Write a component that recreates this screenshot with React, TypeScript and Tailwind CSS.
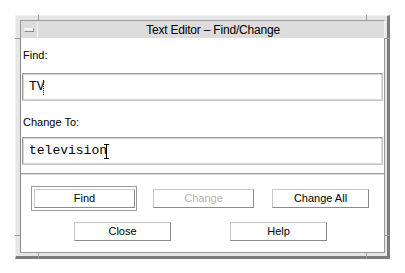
import React from 'react'

const sans = { fontFamily: '"Liberation Sans", Arial, sans-serif' }
const mono = { fontFamily: '"Liberation Mono", "Courier New", monospace' }

function Button({ label, w, disabled }: { label: string; w: string; disabled?: boolean }) {
  return (
    <div
      className={`${w} h-[19px] bg-white border border-t-[#c8c8c8] border-l-[#c8c8c8] border-r-[#8a8a8a] border-b-[#8a8a8a] flex items-center justify-center text-[11px] ${disabled ? 'text-[#b4b4b4]' : 'text-black'}`}
      style={sans}
    >
      {label}
    </div>
  )
}

function Field({ children }: { children: React.ReactNode }) {
  return (
    <div className="mx-[1px] h-[28px] border border-t-[#9a9a9a] border-l-[#9a9a9a] border-r-[#c8c8c8] border-b-[#c8c8c8]">
      <div className="h-full border border-[#d6d6d6] flex items-center pl-[5px] text-[13px] text-black" style={mono}>
        {children}
      </div>
    </div>
  )
}

export default function App() {
  return (
    <div className="w-[405px] h-[273px] bg-white pt-[15px] pl-[15px]">
      <div className="relative w-[375px] h-[244px] bg-[#e6e6e6] border-t border-l border-[#f2f2f2] border-r-[3px] border-b-[3px] border-r-[#7c7c7c] border-b-[#7c7c7c] pt-[4px] pl-[4px] pr-[2px] pb-[3px] flex flex-col">
        {/* resize corner notches */}
        <div className="absolute left-[22px] top-[-1px] w-[1px] h-[5px] bg-[#9a9a9a]" />
        <div className="absolute right-[20px] top-[-1px] w-[1px] h-[5px] bg-[#9a9a9a]" />
        <div className="absolute left-[22px] bottom-[-3px] w-[1px] h-[6px] bg-[#9a9a9a]" />
        <div className="absolute right-[20px] bottom-[-3px] w-[1px] h-[6px] bg-[#9a9a9a]" />
        <div className="absolute left-[-1px] top-[22px] w-[5px] h-[1px] bg-[#9a9a9a]" />
        <div className="absolute right-[-3px] top-[22px] w-[5px] h-[1px] bg-[#9a9a9a]" />
        <div className="absolute left-[-1px] bottom-[20px] w-[5px] h-[1px] bg-[#9a9a9a]" />
        <div className="absolute right-[-3px] bottom-[20px] w-[5px] h-[1px] bg-[#9a9a9a]" />

        {/* title bar */}
        <div className="h-[18px] flex bg-[#dcdcdc] border-t border-l border-[#9a9a9a] border-r border-r-[#f4f4f4]">
          <div className="w-[17px] h-full flex items-center justify-center border-r border-[#f4f4f4]">
            <div className="w-[10px] h-[4px] bg-[#ececec] border border-t-[#f8f8f8] border-l-[#f8f8f8] border-r-[#8a8a8a] border-b-[#8a8a8a]" />
          </div>
          <div className="flex-1 flex items-center justify-center text-[12px] tracking-[-0.2px] text-black pl-[4px]" style={sans}>
            Text Editor – Find/Change
          </div>
        </div>

        {/* content */}
        <div className="flex-1 bg-white border-l border-[#8a8a8a] border-r border-r-[#9a9a9a] border-b border-b-[#9a9a9a] flex flex-col">
          <div className="h-[35px] flex items-center pl-[2px] text-[11px] text-black" style={sans}>
            Find:
          </div>
          <Field>
            <span>TV</span>
            <span className="inline-block w-[1px] h-[15px] border-l border-dotted border-black ml-[-2px]" />
          </Field>
          <div className="h-[36px] flex items-center pl-[2px] pt-[6px] text-[11px] text-black" style={sans}>
            Change To:
          </div>
          <Field>
            <span>television</span>
            <span className="relative inline-block w-[5px] h-[15px] ml-[-3px]">
              <span className="absolute left-[2px] top-0 w-[1px] h-full bg-black" />
              <span className="absolute left-0 top-0 w-[5px] h-[1px] bg-black" />
              <span className="absolute left-0 bottom-0 w-[5px] h-[1px] bg-black" />
            </span>
          </Field>
          <div className="mt-[8px] border-t border-[#9a9a9a] border-b border-b-[#e0e0e0] h-[2px]" />

          <div className="flex pl-[10px] pt-[11px] gap-[16px]">
            <div className="border border-[#9a9a9a] p-[2px] pr-[1px]">
              <Button label="Find" w="w-[101px]" />
            </div>
            <div className="pt-[3px]">
              <Button label="Change" w="w-[101px]" disabled />
            </div>
            <div className="pt-[3px] pl-[2px]">
              <Button label="Change All" w="w-[97px]" />
            </div>
          </div>
          <div className="flex pl-[53px] pt-[11px] gap-[59px]">
            <Button label="Close" w="w-[97px]" />
            <Button label="Help" w="w-[97px]" />
          </div>
        </div>
      </div>
    </div>
  )
}
